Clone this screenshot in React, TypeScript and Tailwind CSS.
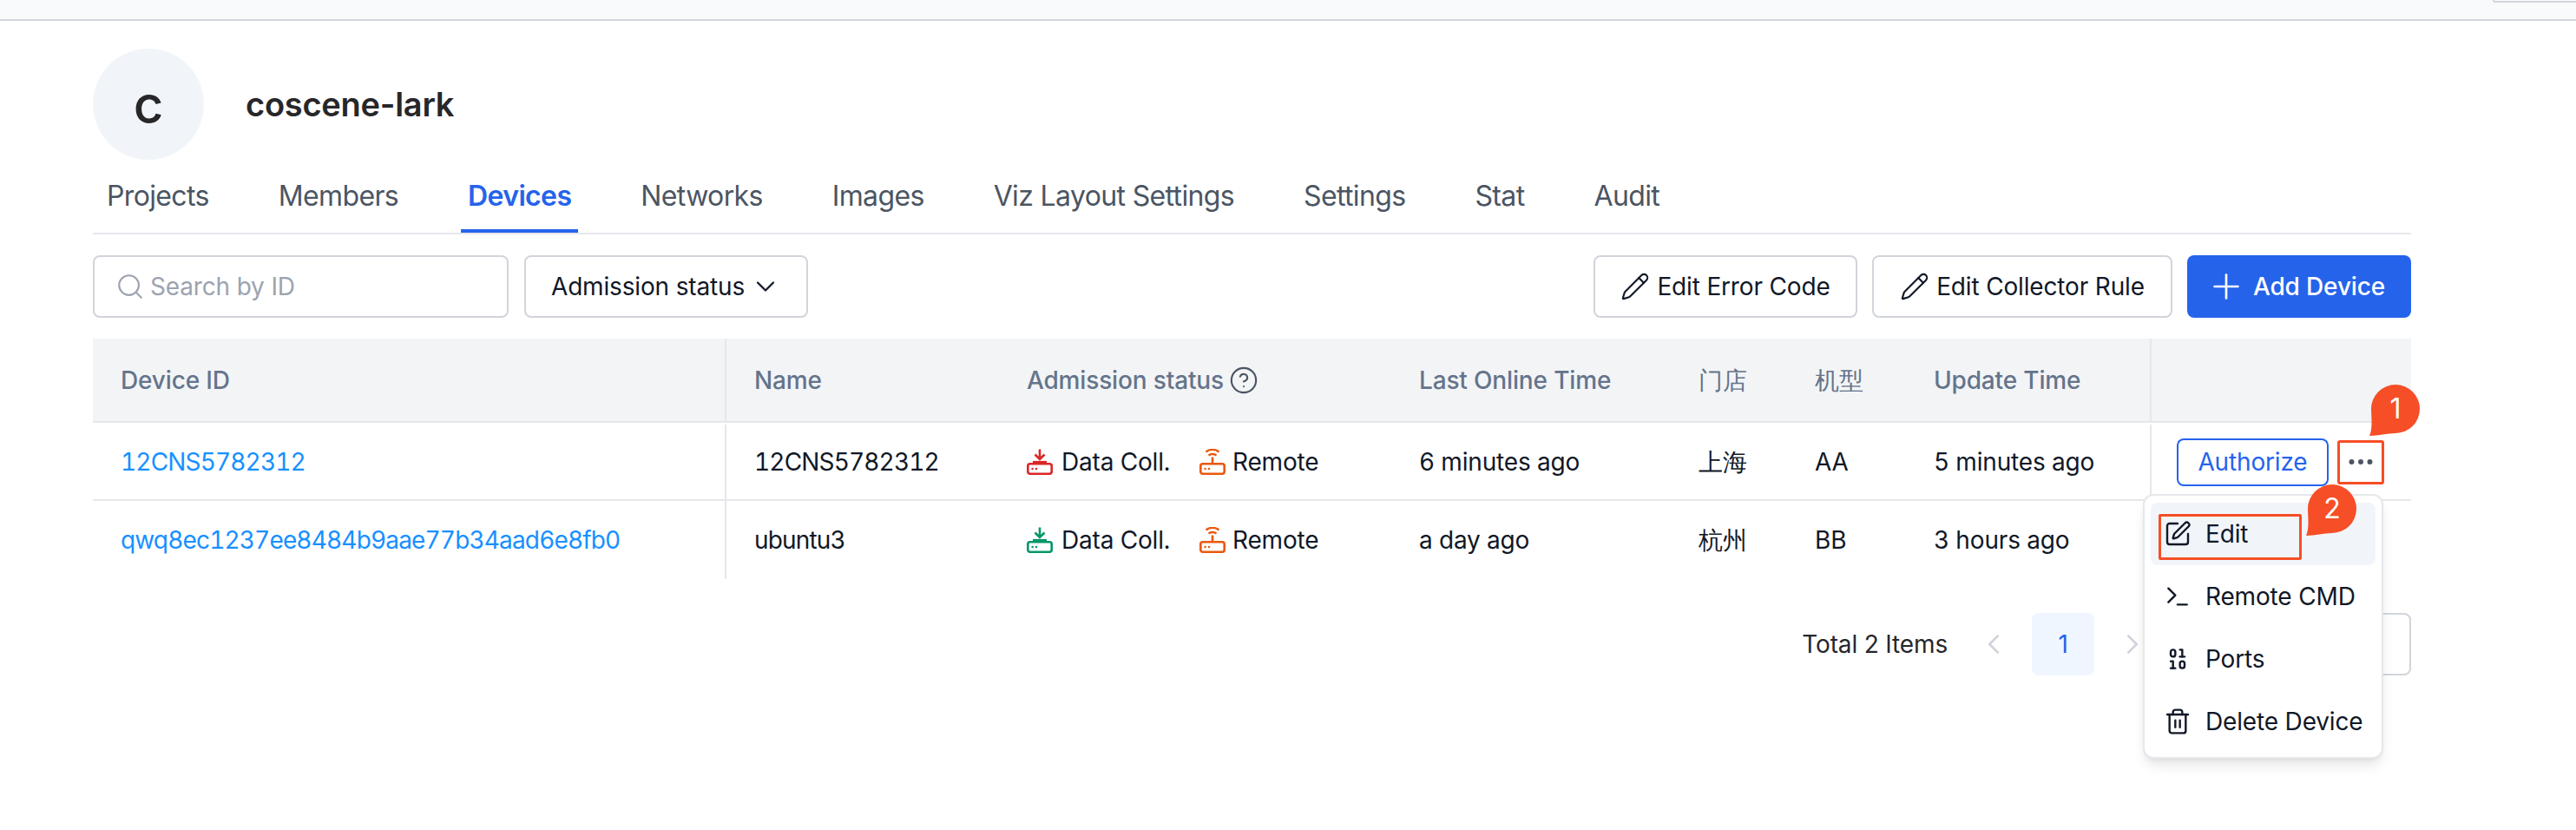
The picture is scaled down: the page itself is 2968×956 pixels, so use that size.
import {
  Binary,
  ChevronDown,
  ChevronLeft,
  ChevronRight,
  CircleHelp,
  Ellipsis,
  Pencil,
  Plus,
  Search,
  SquarePen,
  Terminal,
  Trash2,
} from "lucide-react";

const tabs = ["Projects", "Members", "Devices", "Networks", "Images", "Viz Layout Settings", "Settings", "Stat", "Audit"];

const rowGrid = "grid grid-cols-[728px_316px_452px_322px_134px_137px_281px_301px]";

const devices = [
  { id: "12CNS5782312", name: "12CNS5782312", dataColor: "#dc2626", last: "6 minutes ago", shop: "上海", model: "AA", update: "5 minutes ago" },
  { id: "qwq8ec1237ee8484b9aae77b34aad6e8fb0", name: "ubuntu3", dataColor: "#059669", last: "a day ago", shop: "杭州", model: "BB", update: "3 hours ago" },
];

function RouterBase({ color }: { color: string }) {
  return (
    <>
      <rect x="1.3" y="17.3" width="27.4" height="11.4" rx="2.4" stroke={color} strokeWidth="2.6" fill="none" />
      <circle cx="6.6" cy="23" r="1.3" fill={color} />
      <circle cx="11" cy="23" r="1.3" fill={color} />
    </>
  );
}

function DataIcon({ color }: { color: string }) {
  return (
    <svg width="30" height="30" viewBox="0 0 30 30" fill="none" className="shrink-0">
      <RouterBase color={color} />
      <path d="M15 0.5V11M9.5 6.5L15 12L20.5 6.5" stroke={color} strokeWidth="2.6" />
      <path d="M7 15H23" stroke={color} strokeWidth="2.2" />
    </svg>
  );
}

function RemoteIcon() {
  const color = "#ea580c";
  return (
    <svg width="30" height="30" viewBox="0 0 30 30" fill="none" className="shrink-0">
      <RouterBase color={color} />
      <path d="M15 9.5V17" stroke={color} strokeWidth="2.6" />
      <path d="M7.5 3.5C11.5 0 18.5 0 22.5 3.5M10.5 7.5C13 5.5 17 5.5 19.5 7.5" stroke={color} strokeWidth="2.4" />
    </svg>
  );
}

function Bubble({ label, className }: { label: string; className: string }) {
  return (
    <div className={`absolute w-[60px] h-[60px] ${className}`}>
      <svg width="60" height="60" viewBox="0 0 60 60" className="absolute inset-0">
        <path d="M1 59C5 50 3 38 3 28A28 28 0 1 1 31 56C21 56 12 59 1 59Z" fill="#f64e27" />
      </svg>
      <span className="absolute left-[3px] top-0 w-14 h-14 flex items-center justify-center text-white text-[32px] leading-none">
        {label}
      </span>
    </div>
  );
}

function OutlineButton({ children, className }: { children: React.ReactNode; className: string }) {
  return (
    <button className={`h-[72px] flex items-center justify-center rounded-lg border-2 border-[#d1d5db] bg-white text-[28px] text-[#111827] ${className}`}>
      {children}
    </button>
  );
}

export default function App() {
  return (
    <div className="relative w-[2968px] h-[956px] overflow-hidden bg-white font-['Inter',sans-serif] tracking-[-0.01em]">
      <div className="h-6 bg-gray-50 border-b-2 border-[#d1d5db] flex justify-end">
        <div className="w-24 h-[3px] border-b-2 border-l-2 border-[#d1d5db] rounded-bl-md" />
      </div>

      <div className="w-[2671px] ml-[107px] pt-8">
        <div className="flex items-center gap-12">
          <div className="w-32 h-32 rounded-full bg-[#f1f5f9] flex items-center justify-center text-[60px] font-medium text-[#27272a]">
            c
          </div>
          <h1 className="text-[38px] font-semibold tracking-[-0.25px] text-[#27272a]">coscene-lark</h1>
        </div>

        <div className="h-[86px] flex items-end gap-16 pl-2 border-b-2 border-[#e5e7eb]">
          {tabs.map((tab) => (
            <div
              key={tab}
              className={
                tab === "Devices"
                  ? "h-[62px] px-2 border-b-4 border-[#2563eb] text-[32px] leading-[40px] tracking-[-0.02em] font-semibold text-[#2563eb]"
                  : "h-[62px] px-2 text-[32px] leading-[40px] tracking-[-0.02em] text-[#4b5563]"
              }
            >
              {tab}
            </div>
          ))}
        </div>

        <div className="mt-6 flex items-center">
          <div className="w-[479px] h-[72px] flex items-center gap-[6px] px-6 rounded-lg border-2 border-[#d1d5db] text-[28px] text-[#9ca3af]">
            <Search size={34} strokeWidth={1.5} />
            Search by ID
          </div>
          <OutlineButton className="ml-[18px] w-[327px] gap-[6px]">
            Admission status
            <ChevronDown size={36} strokeWidth={1.5} />
          </OutlineButton>
          <OutlineButton className="ml-auto w-[304px] gap-2">
            <Pencil size={34} strokeWidth={1.5} />
            Edit Error Code
          </OutlineButton>
          <OutlineButton className="ml-[17px] w-[346px] gap-2">
            <Pencil size={34} strokeWidth={1.5} />
            Edit Collector Rule
          </OutlineButton>
          <button className="ml-[17px] w-[258px] h-[72px] flex items-center justify-center gap-4 rounded-lg bg-[#2563eb] text-[28px] font-medium text-white">
            <Plus size={46} strokeWidth={1.4} className="-mx-2" />
            Add Device
          </button>
        </div>

        <div className="mt-6 text-[28px] tabular-nums">
          <div className={`${rowGrid} h-[97px] bg-[#f3f4f6] border-b-2 border-[#e5e7eb] font-medium text-[#64748b]`}>
            <div className="flex items-center pl-8">Device ID</div>
            <div className="flex items-center pl-8 border-l-2 border-[#e5e7eb]">Name</div>
            <div className="flex items-center gap-[6px] pl-8">
              Admission status
              <CircleHelp size={34} strokeWidth={1.5} className="text-[#4b5563]" />
            </div>
            <div className="flex items-center pl-8">Last Online Time</div>
            <div className="flex items-center pl-8">门店</div>
            <div className="flex items-center pl-8">机型</div>
            <div className="flex items-center pl-8">Update Time</div>
            <div className="border-l-2 border-[#e5e7eb]" />
          </div>
          {devices.map((device, i) => (
            <div
              key={device.id}
              className={`${rowGrid} ${i === 0 ? "h-[90px] pt-[2px] border-b-2 border-[#e5e7eb]" : "h-[90px]"} text-[#111827]`}
            >
              <div className="flex items-center pl-8 tracking-[-0.03em] text-[#1890ff]">{device.id}</div>
              <div className="flex items-center pl-8 tracking-[-0.03em] border-l-2 border-[#e5e7eb]">{device.name}</div>
              <div className="flex items-center pl-8">
                <DataIcon color={device.dataColor} />
                <span className="ml-[10px] w-[159px]">Data Coll.</span>
                <RemoteIcon />
                <span className="ml-[8px]">Remote</span>
              </div>
              <div className="flex items-center pl-8">{device.last}</div>
              <div className="flex items-center pl-8">{device.shop}</div>
              <div className="flex items-center pl-8">{device.model}</div>
              <div className="flex items-center pl-8">{device.update}</div>
              <div className="flex items-center pl-[29px] border-l-2 border-[#e5e7eb]">
                {i === 0 && (
                  <>
                    <button className="w-[175px] h-[55px] rounded-lg border-2 border-[#2563eb] text-[#2563eb]">
                      Authorize
                    </button>
                    <div className="ml-[10px] w-[54px] h-[51px] flex items-center justify-center border-[3px] border-[#f64e27] rounded-[3px] text-[#4b5563]">
                      <Ellipsis size={36} strokeWidth={2} />
                    </div>
                  </>
                )}
              </div>
            </div>
          ))}
        </div>

        <div className="mt-[39px] flex items-center justify-end text-[28px] text-[#27272a]">
          <span>Total 2 Items</span>
          <div className="ml-[17px] w-[72px] h-[72px] flex items-center justify-center text-[#d1d5db]">
            <ChevronLeft size={38} strokeWidth={1.7} />
          </div>
          <div className="ml-2 w-[72px] h-[72px] rounded-lg bg-[#eff6ff] flex items-center justify-center text-[#2563eb]">1</div>
          <div className="ml-2 w-[72px] h-[72px] flex items-center justify-center text-[#d1d5db]">
            <ChevronRight size={38} strokeWidth={1.7} />
          </div>
          <div className="ml-2 w-[277px] h-[72px] rounded-lg border-2 border-[#d1d5db]" />
        </div>
      </div>

      <div className="absolute left-[2469px] top-[569px] w-[277px] h-[305px] p-2 rounded-xl border-2 border-[#e5e7eb] bg-white shadow-lg text-[28px] text-[#111827]">
        <div className="h-[72px] -mx-[1px] flex items-center gap-4 pl-[15px] rounded-lg bg-[#f1f5f9]">
          <SquarePen size={32} strokeWidth={1.8} />
          Edit
        </div>
        <div className="h-[72px] flex items-center gap-4 pl-[14px]">
          <Terminal size={32} strokeWidth={1.8} />
          Remote CMD
        </div>
        <div className="h-[72px] flex items-center gap-4 pl-[14px]">
          <Binary size={32} strokeWidth={1.8} />
          Ports
        </div>
        <div className="h-[72px] flex items-center gap-4 pl-[14px] whitespace-nowrap">
          <Trash2 size={32} strokeWidth={1.8} />
          Delete Device
        </div>
      </div>

      <div className="absolute left-[2487px] top-[592px] w-[165px] h-[53px] border-[3px] border-[#f64e27] rounded-[2px]" />
      <Bubble label="1" className="left-[2729px] top-[443px]" />
      <Bubble label="2" className="left-[2656px] top-[558px]" />
    </div>
  );
}
